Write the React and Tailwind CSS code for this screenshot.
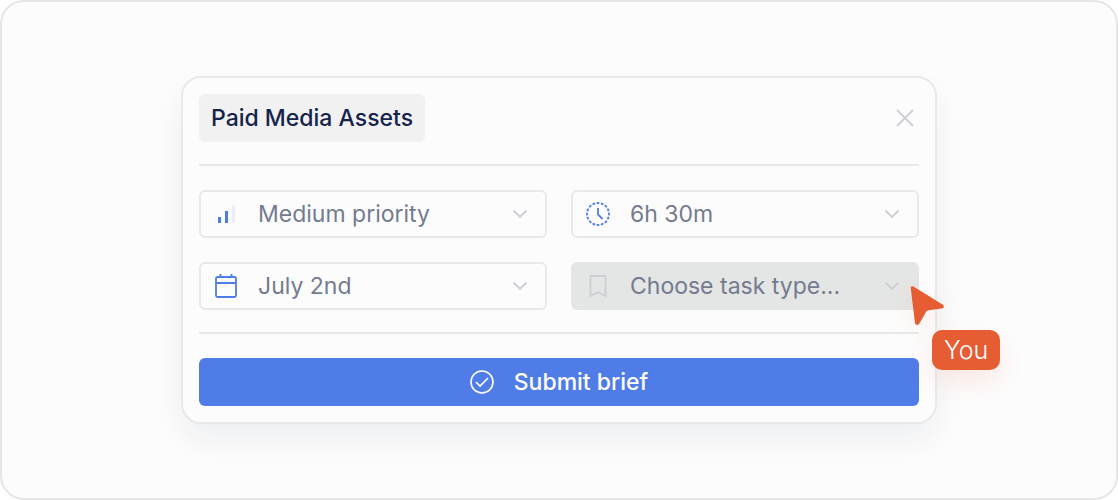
import { useState } from "react";

const fields = [
  {
    id: "priority",
    label: "Priority",
    icon: PriorityIcon,
    options: ["Medium priority", "Low priority", "High priority"],
  },
  {
    id: "estimate",
    label: "Time estimate",
    icon: ClockIcon,
    options: ["6h 30m", "4h 00m", "8h 00m"],
  },
  {
    id: "due",
    label: "Due date",
    icon: CalendarIcon,
    options: ["July 2nd", "July 3rd", "July 4th"],
  },
  {
    id: "type",
    label: "Task type",
    icon: BookmarkIcon,
    options: ["Choose task type...", "Design", "Copywriting"],
    active: true,
  },
];

function PriorityIcon() {
  return (
    <svg viewBox="0 0 24 24" className="h-6 w-6 shrink-0" aria-hidden="true">
      <path d="M4 15h3v6H4z" fill="#507ce8" />
      <path d="M11 9h3v12h-3z" fill="#507ce8" />
      <path d="M18 3h3v18h-3z" fill="#e9eefb" />
    </svg>
  );
}

function ClockIcon() {
  return (
    <svg
      viewBox="0 0 24 24"
      className="h-6 w-6 shrink-0"
      fill="none"
      stroke="#507ce8"
      strokeWidth="1.8"
      aria-hidden="true"
    >
      <circle
        cx="12"
        cy="12"
        r="11"
        pathLength="160"
        strokeDasharray="6.4 3.6"
        strokeDashoffset="3.2"
      />
      <path d="M12 6v6.500l4.500 4.500" />
    </svg>
  );
}

function CalendarIcon() {
  return (
    <svg
      viewBox="0 0 24 24"
      className="h-6 w-6 shrink-0"
      fill="none"
      stroke="#507ce8"
      strokeWidth="1.8"
      aria-hidden="true"
    >
      <rect x="2" y="3" width="20" height="20" rx="1.5" />
      <path d="M2 9h20M6.5 0v3M17.5 0v3" />
    </svg>
  );
}

function BookmarkIcon() {
  return (
    <svg
      viewBox="0 0 24 24"
      className="h-6 w-6 shrink-0"
      fill="none"
      stroke="#cdced4"
      strokeWidth="1.8"
      strokeLinejoin="round"
      aria-hidden="true"
    >
      <path d="M5.500 2h13a1 1 0 0 1 1 1v19L12 18.400 4.500 22V3a1 1 0 0 1 1-1z" />
    </svg>
  );
}

function ChevronIcon() {
  return (
    <svg
      viewBox="0 0 24 24"
      className="h-6 w-6 shrink-0"
      fill="none"
      stroke="#cdced4"
      strokeWidth="1.8"
      aria-hidden="true"
    >
      <path d="M5.500 8.500 12 15l6.500-6.500" />
    </svg>
  );
}

function Pointer({ name }) {
  return (
    <div className="pointer-events-none absolute top-1/2 left-full -ml-[11px]">
      <svg
        viewBox="0 0 40 44"
        className="h-11 w-10 drop-shadow-[0_8px_12px_rgba(230,92,51,0.12)]"
        fill="#e65c33"
        aria-hidden="true"
      >
        <path d="M5.400.500 34.500 18.400c2.200 1.400 1.600 3.900-1 4.200L20.600 24.200c-1.200.2-2 .7-2.600 1.700L11.400 37.600c-1.100 2-4 1.800-4.400-.6L2.800 2.600C2.500.6 3.700-.3 5.400.5z" />
      </svg>
      <span className="absolute top-11 left-6 rounded-[10px] bg-[#e65c33] px-3 py-1 text-[25px] leading-8 font-light text-white shadow-[0_12px_24px_rgba(230,92,51,0.12)]">
        {name}
      </span>
    </div>
  );
}

function SelectField({ field }) {
  const [value, setValue] = useState(field.options[0]);
  const Icon = field.icon;

  return (
    <div className="relative">
      <label
        htmlFor={field.id}
        className={`flex h-12 items-center rounded-md border-2 px-[13px] ${
          field.active
            ? "border-[#e4e6e5] bg-[#e4e6e5]"
            : "border-[#e8e9e9] bg-[#fcfcfc]"
        }`}
      >
        <Icon />
        <select
          id={field.id}
          aria-label={field.label}
          value={value}
          onChange={(e) => setValue(e.target.value)}
          className="min-w-0 flex-1 appearance-none bg-transparent pl-5 text-[23px] leading-8 text-[#747b8e] outline-none"
        >
          {field.options.map((option) => (
            <option key={option}>{option}</option>
          ))}
        </select>
        <ChevronIcon />
      </label>
      {field.active && <Pointer name="You" />}
    </div>
  );
}

export default function App() {
  return (
    <main className="flex min-h-screen items-center justify-center rounded-3xl border-2 border-[#e6e6e6] bg-[#fcfcfc] px-4 py-8 font-[Inter,sans-serif]">
      <form
        onSubmit={(e) => e.preventDefault()}
        className="w-full max-w-[756px] rounded-[20px] border-2 border-[#e8eaea] bg-[#fcfcfc] p-4 shadow-[0_16px_32px_rgba(20,35,70,0.06)]"
      >
        <header className="flex items-center justify-between border-b-2 border-[#e8e9e9] pb-[22px]">
          <h1 className="rounded-md bg-[#f1f1f2] px-3 py-2 text-[23px] leading-8 font-medium text-[#14234b]">
            Paid Media Assets
          </h1>
          <button type="button" aria-label="Close" className="p-0.5">
            <svg
              viewBox="0 0 24 24"
              className="h-6 w-6"
              fill="none"
              stroke="#cdced4"
              strokeWidth="1.8"
              aria-hidden="true"
            >
              <path d="m4 4 16 16M20 4 4 20" />
            </svg>
          </button>
        </header>

        <div className="grid gap-6 pt-6 pb-[22px] sm:grid-cols-2">
          {fields.map((field) => (
            <SelectField key={field.id} field={field} />
          ))}
        </div>

        <footer className="border-t-2 border-[#e8e9e9] pt-6">
          <button
            type="submit"
            className="flex h-12 w-full items-center justify-center gap-5 rounded-md bg-[#507ce8] text-[23px] leading-8 font-medium text-white"
          >
            <svg
              viewBox="0 0 24 24"
              className="h-6 w-6"
              fill="none"
              stroke="currentColor"
              strokeWidth="1.6"
              aria-hidden="true"
            >
              <circle cx="12" cy="12" r="11" />
              <path d="m6 12 4 4 8-8" />
            </svg>
            Submit brief
          </button>
        </footer>
      </form>
    </main>
  );
}
